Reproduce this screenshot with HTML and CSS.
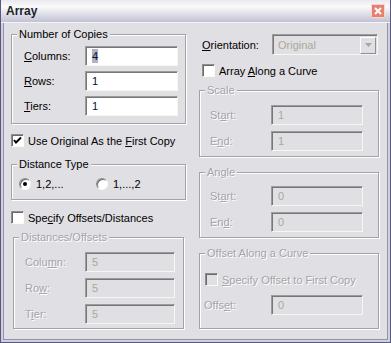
FILE: index.html
```html
<!DOCTYPE html>
<html lang="en">
<head>
    <meta charset="UTF-8">
    <title>Array</title>
    <link rel="stylesheet" href="styles.css">
</head>
<body>
    <div class="window">
        <div class="titlebar">
            <span class="title">Array</span>
            <span class="close">
                <svg width="14" height="14" viewBox="0 0 14 14">
                    <rect x="0.5" y="0.5" width="13" height="13" rx="1" fill="#e7806e" stroke="#f6d8d0"/>
                    <path d="M4 4 L10 10 M10 4 L4 10" stroke="#fff" stroke-width="2"/>
                </svg>
            </span>
        </div>
        <div class="client">
            <div class="col left">
                <div class="group copies">
                    <span class="legend">Number of Copies</span>
                    <div class="field">
                        <label><u>C</u>olumns:</label>
                        <div class="box"><span class="sel">4</span></div>
                    </div>
                    <div class="field">
                        <label><u>R</u>ows:</label>
                        <div class="box">1</div>
                    </div>
                    <div class="field">
                        <label><u>T</u>iers:</label>
                        <div class="box">1</div>
                    </div>
                </div>

                <div class="check-row first">
                    <span class="check on">
                        <svg width="9" height="9" viewBox="0 0 9 9"><path d="M1 4 L3 6.5 L8 1.5" fill="none" stroke="#000" stroke-width="2"/></svg>
                    </span>
                    <span>Use Original As the <u>F</u>irst Copy</span>
                </div>

                <div class="group dist-type">
                    <span class="legend">Distance Type</span>
                    <div class="radios">
                        <div class="radio-item">
                            <span class="radio on"></span>
                            <span>1,2,...</span>
                        </div>
                        <div class="radio-item">
                            <span class="radio"></span>
                            <span>1,...,2</span>
                        </div>
                    </div>
                </div>

                <div class="check-row second">
                    <span class="check"></span>
                    <span>Spe<u>c</u>ify Offsets/Distances</span>
                </div>

                <div class="group offsets">
                    <span class="legend dis">Distances/Offsets</span>
                    <div class="field">
                        <label class="dis">Colu<u>m</u>n:</label>
                        <div class="box off">5</div>
                    </div>
                    <div class="field">
                        <label class="dis">Ro<u>w</u>:</label>
                        <div class="box off">5</div>
                    </div>
                    <div class="field">
                        <label class="dis">T<u>i</u>er:</label>
                        <div class="box off">5</div>
                    </div>
                </div>
            </div>

            <div class="col right">
                <div class="orient">
                    <label><u>O</u>rientation:</label>
                    <div class="select">
                        <span class="select-text">Original</span>
                        <span class="drop">
                            <svg width="7" height="4" viewBox="0 0 7 4"><path d="M0 0 H7 L3.5 4 Z" fill="#a7a6aa"/></svg>
                        </span>
                    </div>
                </div>

                <div class="check-row curve">
                    <span class="check"></span>
                    <span>Array <u>A</u>long a Curve</span>
                </div>

                <div class="group scale">
                    <span class="legend dis">Scale</span>
                    <div class="field">
                        <label class="dis">St<u>a</u>rt:</label>
                        <div class="box off">1</div>
                    </div>
                    <div class="field">
                        <label class="dis">E<u>n</u>d:</label>
                        <div class="box off">1</div>
                    </div>
                </div>

                <div class="group angle">
                    <span class="legend dis">Angle</span>
                    <div class="field">
                        <label class="dis">St<u>a</u>rt:</label>
                        <div class="box off">0</div>
                    </div>
                    <div class="field">
                        <label class="dis">En<u>d</u>:</label>
                        <div class="box off">0</div>
                    </div>
                </div>

                <div class="group along">
                    <span class="legend dis">Offset Along a Curve</span>
                    <div class="check-row inner">
                        <span class="check off"></span>
                        <span class="dis"><u>S</u>pecify Offset to First Copy</span>
                    </div>
                    <div class="field">
                        <label class="dis">Offs<u>e</u>t:</label>
                        <div class="box off">0</div>
                    </div>
                </div>
            </div>
        </div>
    </div>
</body>
</html>
```

FILE: styles.css
```css
body {
    margin: 0;
    font-family: "Liberation Sans", Arial, sans-serif;
    font-size: 11px;
    color: #000;
    background: #e0dfe3;
}
.window {
    width: 391px;
    height: 343px;
    box-sizing: border-box;
    border: 1px solid #58587c;
    border-top: none;
    padding: 0 2px 2px 2px;
    background: #cfcfdd;
    display: flex;
    flex-direction: column;
}
.titlebar {
    height: 22px;
    margin: 0 -2px;
    padding: 0 4px 0 5px;
    display: flex;
    align-items: center;
    justify-content: space-between;
    background: linear-gradient(#e9e9ef 0%, #fbfbfc 30%, #e2e2ea 60%, #c2c2d4 100%);
    border-bottom: 1px solid #f4f4f8;
}
.title {
    font-weight: bold;
    font-size: 12px;
    color: #1e1e2a;
}
.close {
    display: flex;
    margin-right: 1px;
}
.client {
    flex: 1;
    background: #e0dfe3;
    border: 1px solid #9494b0;
    border-top: none;
    padding: 11px 0 0 7px;
    display: flex;
    gap: 13px;
}
.col {
    display: flex;
    flex-direction: column;
}
.left {
    width: 175px;
}
.right {
    width: 180px;
}

/* group boxes */
.group {
    --pt: 12px;
    box-sizing: border-box;
    border: 1px solid #a3a3a6;
    box-shadow: 1px 1px 0 #fff, inset 1px 1px 0 #fff;
    display: flex;
    flex-direction: column;
}
.legend {
    align-self: flex-start;
    line-height: 13px;
    height: 13px;
    margin: -7px 0 calc(var(--pt) - 6px) 5px;
    padding: 0 2px;
    background: #e0dfe3;
}
.field {
    display: flex;
    align-items: center;
    height: 20px;
}
.field label {
    flex: none;
}

.copies {
    --pt: 11px;
    padding: 0 0 7px 12px;
}
.copies .legend {
    margin-left: -7px;
}
.copies .field + .field {
    margin-top: 5px;
}
.copies label {
    width: 61px;
}
.copies .box {
    width: 93px;
}

.dist-type {
    --pt: 12px;
    margin-top: 17px;
    padding: 0 0 9px 0;
}
.radios {
    display: flex;
    padding-left: 7px;
}
.radio-item {
    display: flex;
    align-items: center;
    gap: 5px;
    height: 13px;
}
.radio-item:first-child {
    width: 77px;
}

.offsets {
    --pt: 14px;
    margin: 13px 0 0 2px;
    width: 171px;
    padding: 0 0 4px 11px;
}
.offsets .legend {
    margin-left: -6px;
}
.offsets .field + .field {
    margin-top: 6px;
}
.offsets label {
    width: 60px;
}
.offsets .box {
    width: 90px;
}

/* text boxes */
.box {
    box-sizing: border-box;
    height: 20px;
    border: 1px solid;
    border-color: #9c9c9c #f7f7ef #f7f7ef #9c9c9c;
    box-shadow: inset 1px 1px 0 #777;
    background: #fff;
    color: #0c0c3c;
    padding-left: 6px;
    display: flex;
    align-items: center;
}
.box.off {
    background: #e0dfe3;
    color: #aca899;
}
.sel {
    background: #b1b2bf;
    padding: 1px 0;
}

/* check boxes and radios */
.check-row {
    display: flex;
    align-items: center;
    gap: 4px;
    height: 13px;
}
.check-row.first {
    margin-top: 10px;
}
.check-row.second {
    margin-top: 11px;
}
.check-row.curve {
    margin: 9px 0 0 3px;
}
.check {
    box-sizing: border-box;
    width: 13px;
    height: 13px;
    border: 1px solid;
    border-color: #8e8e8e #fbfbf4 #fbfbf4 #8e8e8e;
    box-shadow: inset 1px 1px 0 #6a6a6a;
    background: #fff;
    display: flex;
    align-items: center;
    justify-content: center;
}
.check.off {
    background: #e0dfe3;
}
.radio {
    box-sizing: border-box;
    width: 12px;
    height: 12px;
    border-radius: 50%;
    border: 1px solid;
    border-color: #8e8e8e #fbfbf4 #fbfbf4 #8e8e8e;
    box-shadow: inset 1px 1px 0 #6a6a6a;
    background: #fff;
    display: flex;
    align-items: center;
    justify-content: center;
}
.radio.on::after {
    content: "";
    width: 4px;
    height: 4px;
    border-radius: 50%;
    background: #000;
}

/* right column */
.orient {
    display: flex;
    align-items: center;
    height: 21px;
    padding-left: 3px;
}
.orient label {
    width: 70px;
}
.select {
    box-sizing: border-box;
    width: 106px;
    height: 21px;
    border: 1px solid;
    border-color: #9c9c9c #f7f7ef #f7f7ef #9c9c9c;
    box-shadow: inset 1px 1px 0 #777;
    background: #e0dfe3;
    display: flex;
    align-items: center;
    justify-content: space-between;
    padding: 1px 1px 0 5px;
}
.select-text {
    color: #aca899;
}
.drop {
    width: 16px;
    height: 17px;
    box-sizing: border-box;
    border: 1px solid;
    border-color: #fff #8e8e8e #8e8e8e #fff;
    background: #e0dfe3;
    display: flex;
    align-items: center;
    justify-content: center;
}

.scale {
    --pt: 14px;
    margin-top: 13px;
    padding: 0 0 5px 10px;
}
.angle {
    --pt: 13px;
    margin-top: 15px;
    padding: 0 0 5px 10px;
}
.scale .legend,
.angle .legend {
    margin-left: -5px;
}
.scale .field + .field,
.angle .field + .field {
    margin-top: 6px;
}
.scale label,
.angle label {
    width: 61px;
}
.scale .box,
.angle .box {
    width: 92px;
}

.along {
    --pt: 19px;
    margin-top: 15px;
    padding: 0 0 13px 0;
}
.check-row.inner {
    padding-left: 5px;
}
.along .field {
    margin-top: 9px;
    padding-left: 4px;
}
.along label {
    width: 67px;
}
.along .box {
    width: 92px;
}

.dis {
    color: #a5a4a8;
    text-shadow: 1px 1px 0 #fff;
}
```
